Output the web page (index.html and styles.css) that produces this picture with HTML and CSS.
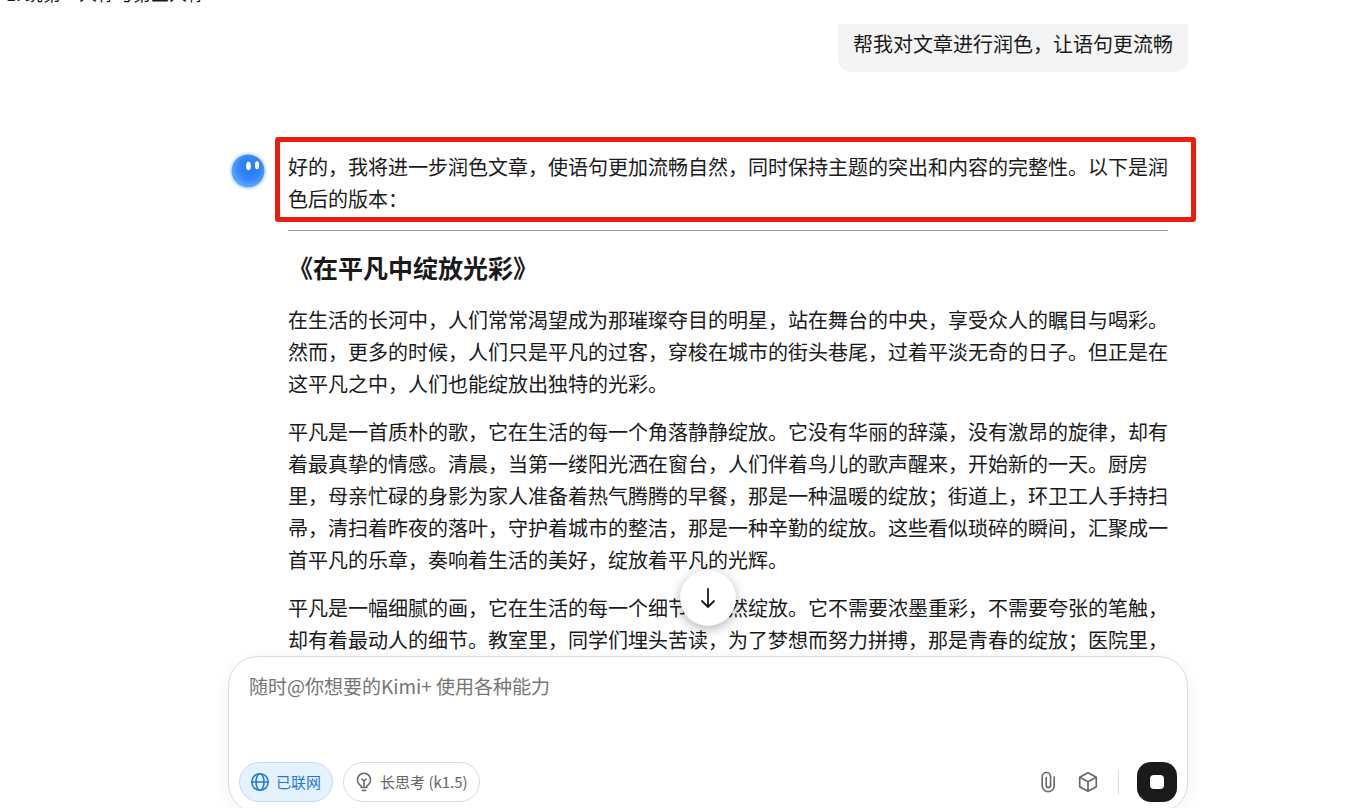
FILE: index.html
```html
<!DOCTYPE html>
<html lang="zh-CN">

<head>
    <meta charset="UTF-8">
    <meta name="viewport" content="width=device-width, initial-scale=1.0">
    <title>Kimi</title>
    <link rel="stylesheet" href="styles.css">
</head>

<body>
    <div class="topbar">
        <span class="topbar-title">1. 统第一人称与第三人称</span>
    </div>

    <main class="chat">
        <div class="column">
            <div class="user-message">帮我对文章进行润色，让语句更流畅</div>

            <article class="reply">
                <svg class="avatar" viewBox="0 0 40 40" aria-hidden="true">
                    <defs>
                        <radialGradient id="face" cx="55%" cy="42%" r="58%">
                            <stop offset="0" stop-color="#2378f5" />
                            <stop offset="0.6" stop-color="#3587f8" />
                            <stop offset="1" stop-color="#62aafd" />
                        </radialGradient>
                        <radialGradient id="glow">
                            <stop offset="0.84" stop-color="#cfe5fd" />
                            <stop offset="1" stop-color="#fff" />
                        </radialGradient>
                    </defs>
                    <circle cx="20" cy="20" r="20" fill="url(#glow)" />
                    <circle cx="20" cy="20" r="16.5" fill="url(#face)" />
                    <ellipse cx="20.5" cy="15" rx="2.4" ry="4.3" fill="#fff" />
                    <ellipse cx="29" cy="14.3" rx="2.1" ry="4" fill="#fff" />
                </svg>
                <div class="reply-body">
                    <p class="intro">好的，我将进一步润色文章，使语句更加流畅自然，同时保持主题的突出和内容的完整性。以下是润色后的版本：</p>
                    <hr>
                    <h3>《在平凡中绽放光彩》</h3>
                    <p>在生活的长河中，人们常常渴望成为那璀璨夺目的明星，站在舞台的中央，享受众人的瞩目与喝彩。然而，更多的时候，人们只是平凡的过客，穿梭在城市的街头巷尾，过着平淡无奇的日子。但正是在这平凡之中，人们也能绽放出独特的光彩。</p>
                    <p>平凡是一首质朴的歌，它在生活的每一个角落静静绽放。它没有华丽的辞藻，没有激昂的旋律，却有着最真挚的情感。清晨，当第一缕阳光洒在窗台，人们伴着鸟儿的歌声醒来，开始新的一天。厨房里，母亲忙碌的身影为家人准备着热气腾腾的早餐，那是一种温暖的绽放；街道上，环卫工人手持扫帚，清扫着昨夜的落叶，守护着城市的整洁，那是一种辛勤的绽放。这些看似琐碎的瞬间，汇聚成一首平凡的乐章，奏响着生活的美好，绽放着平凡的光辉。</p>
                    <p>平凡是一幅细腻的画，它在生活的每一个细节中悄然绽放。它不需要浓墨重彩，不需要夸张的笔触，却有着最动人的细节。教室里，同学们埋头苦读，为了梦想而努力拼搏，那是青春的绽放；医院里，</p>
                </div>
            </article>
        </div>
    </main>

    <footer class="dock">
        <div class="column">
            <button class="scroll-down" type="button" aria-label="滚动到底部">
                <svg width="24" height="24" viewBox="0 0 24 24" fill="none" stroke="#1a1a1a" stroke-width="1.8" stroke-linecap="round" stroke-linejoin="round">
                    <path d="M12 3v18M6 15l6 6 6-6" />
                </svg>
            </button>
            <form class="composer">
                <textarea class="prompt" aria-label="输入消息" placeholder="随时@你想要的Kimi+ 使用各种能力"></textarea>
                <div class="toolbar">
                    <button class="pill pill-active" type="button">
                        <svg width="20" height="20" viewBox="0 0 20 20" fill="none" stroke="currentColor" stroke-width="1.5">
                            <circle cx="10" cy="10" r="8.3" />
                            <ellipse cx="10" cy="10" rx="4" ry="8.3" />
                            <path d="M1.7 10h16.6" />
                        </svg>
                        已联网
                    </button>
                    <button class="pill" type="button">
                        <svg width="20" height="20" viewBox="0 0 20 20" fill="none" stroke="currentColor" stroke-width="1.5" stroke-linecap="round" stroke-linejoin="round">
                            <path d="M7.200 15.500v-1.600C5 12.500 3.500 10.500 3.500 7.700a6.500 6.500 0 0 1 13 0c0 2.800-1.500 4.800-3.700 6.200v1.600zM8.200 18.500h3.600M7.800 7 10 9l2.200-2M10 9v6" />
                        </svg>
                        长思考 (k1.5)
                    </button>
                    <span class="spacer"></span>
                    <button class="icon-button" type="button" aria-label="上传附件">
                        <svg width="22" height="22" viewBox="0 0 22 22" fill="none" stroke="currentColor" stroke-width="1.6" stroke-linecap="round">
                            <path d="M17.200 6v8.800a6 6 0 0 1-12 0V5.700a4.200 4.200 0 0 1 8.400 0v8.500a2.200 2.200 0 0 1-4.400 0V6.500" />
                        </svg>
                    </button>
                    <button class="icon-button" type="button" aria-label="工具">
                        <svg width="22" height="22" viewBox="0 0 22 22" fill="none" stroke="currentColor" stroke-width="1.6" stroke-linejoin="round" stroke-linecap="round">
                            <path d="M11 1.700 19.300 6.200v9.600L11 20.300l-8.300-4.500V6.200zM3 6.400l8 4.400 8-4.400M11 10.800v9.300" />
                        </svg>
                    </button>
                    <span class="divider"></span>
                    <button class="stop" type="button" aria-label="停止生成"><span class="stop-mark"></span></button>
                </div>
            </form>
        </div>
    </footer>
</body>

</html>
```
FILE: styles.css
```css
* {
    box-sizing: border-box;
}

body {
    margin: 0;
    height: 100vh;
    padding-left: 64px;
    display: flex;
    flex-direction: column;
    overflow: hidden;
    background: #fff;
    color: #1a1a1a;
    font-family: "Noto Sans CJK SC", sans-serif;
    font-size: 20px;
    line-height: 32px;
}

button,
textarea {
    font-family: "Noto Sans CJK SC", sans-serif;
}

button {
    display: flex;
    align-items: center;
    justify-content: center;
    padding: 0;
    border: none;
    background: none;
    cursor: pointer;
}

.column {
    position: relative;
    width: 100%;
    max-width: 960px;
    margin: 0 auto;
}

.topbar {
    display: flex;
    align-items: flex-start;
    height: 24px;
    flex: none;
    margin-left: -64px;
    padding-left: 6px;
}

.topbar-title {
    margin-top: -17px;
    font-size: 18px;
    line-height: 20px;
}

.chat {
    flex: 1;
    min-height: 0;
    overflow: hidden;
}

.user-message {
    width: fit-content;
    margin-left: auto;
    padding: 4px 15px 12px;
    border-radius: 0 0 14px 14px;
    background: #f4f4f4;
}

.reply {
    display: flex;
    gap: 20px;
    margin-top: 79px;
    padding-right: 20px;
}

.avatar {
    width: 40px;
    height: 40px;
    flex: none;
}

.reply-body {
    flex: 1;
    min-width: 0;
}

.reply-body p {
    margin: 0 0 16px;
}

.reply-body .intro {
    position: relative;
    margin: 0;
}

/* red frame around the opening lines */
.intro::after {
    content: "";
    position: absolute;
    inset: -14px -28px -7px -13px;
    border: 5px solid #ee1c0f;
    border-radius: 3px;
}

hr {
    height: 1px;
    margin: 15px 0 18px;
    border: none;
    background: #999;
}

h3 {
    margin: 0 0 19px;
    font-size: 25px;
    line-height: 36px;
    font-weight: 700;
}

.dock {
    flex: none;
    margin-bottom: -5px;
}

.scroll-down {
    position: absolute;
    left: 50%;
    bottom: 100%;
    width: 56px;
    height: 56px;
    margin: 0 0 30px -28px;
    border-radius: 50%;
    background: #fff;
    box-shadow: 0 3px 12px rgba(0, 0, 0, 0.3);
}

.composer {
    padding: 14px 10px 10px;
    border: 1px solid #dcdcdc;
    border-radius: 30px;
    background: #fff;
    box-shadow: 0 4px 20px rgba(0, 0, 0, 0.06);
}

.prompt {
    display: block;
    width: 100%;
    height: 91px;
    padding: 0 10px;
    border: none;
    outline: none;
    resize: none;
    background: none;
    font-size: 19px;
    line-height: 30px;
}

.prompt::placeholder {
    color: #757575;
}

.toolbar {
    display: flex;
    align-items: center;
}

.pill {
    gap: 6px;
    height: 40px;
    margin-right: 10px;
    padding: 0 11px 0 10px;
    border: 1px solid #dcdcdc;
    border-radius: 20px;
    color: #666;
    font-size: 15px;
    line-height: 20px;
}

.pill-active {
    border-color: #c3dcf5;
    background: #e4f1fe;
    color: #1f7ae0;
}

.spacer {
    flex: 1;
}

.icon-button {
    width: 40px;
    height: 40px;
    color: #666;
}

.divider {
    width: 1px;
    height: 26px;
    margin: 0 18px 0 10px;
    background: #dcdcdc;
}

.stop {
    width: 40px;
    height: 40px;
    border-radius: 14px;
    background: #1a1a1a;
}

.stop-mark {
    width: 14px;
    height: 14px;
    border-radius: 4px;
    background: #fff;
}
```
